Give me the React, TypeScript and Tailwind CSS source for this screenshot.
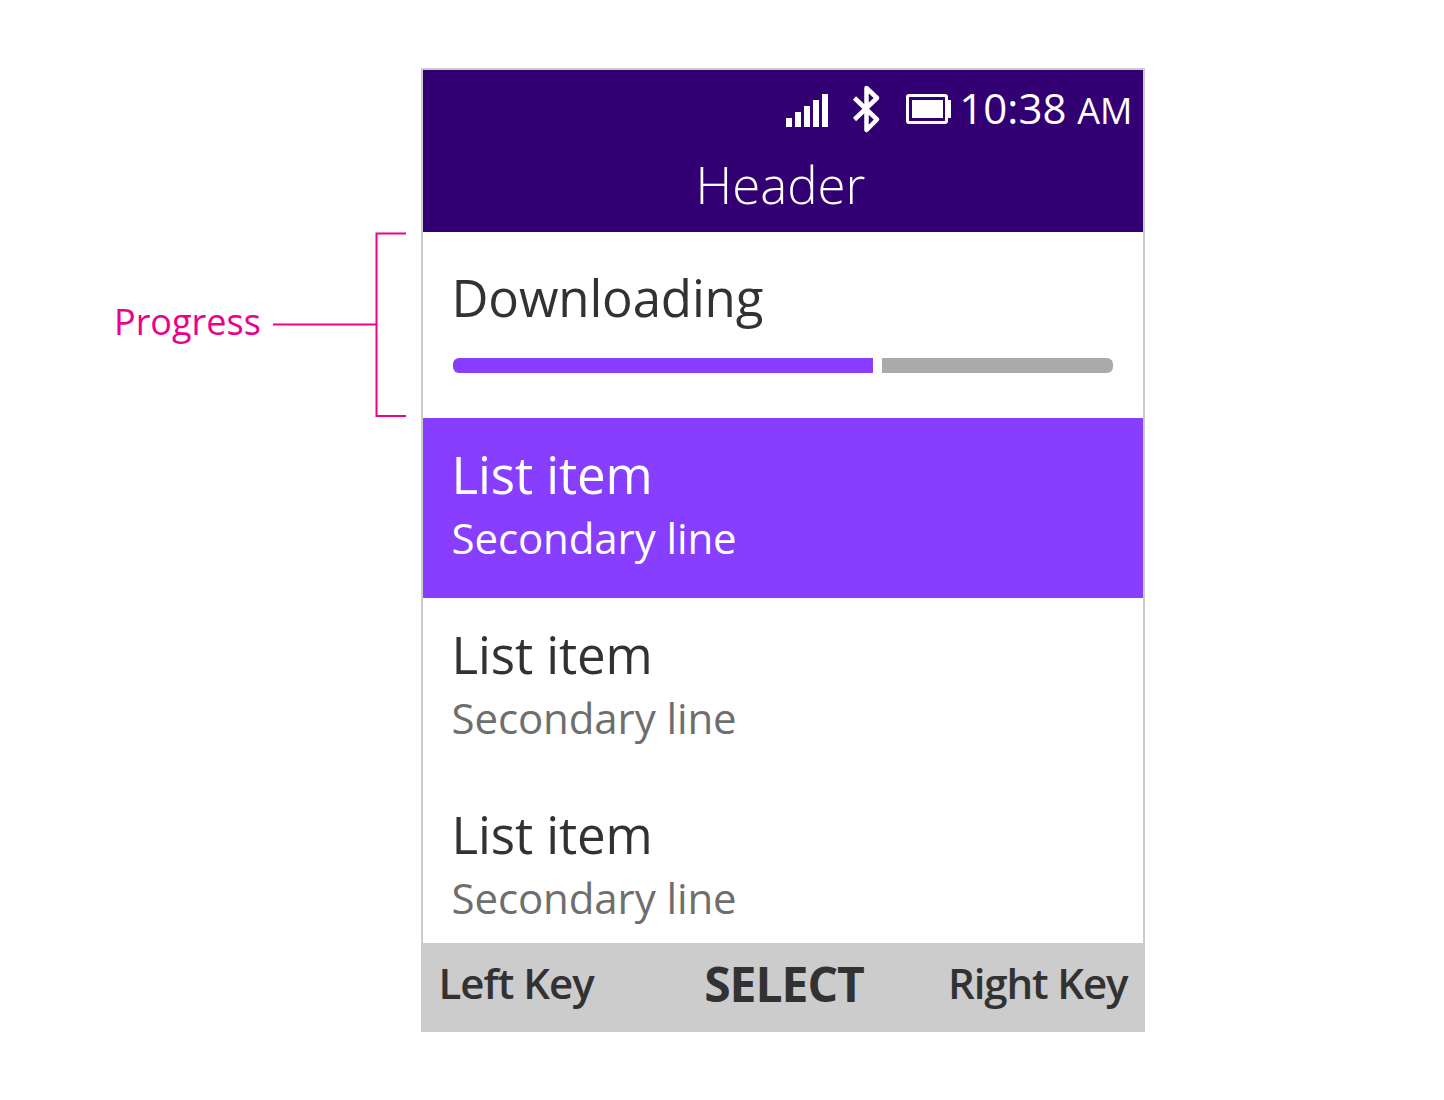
const items = [true, false, false];

export default function App() {
  return (
    <main className="flex h-[1100px] w-[1444px] items-start overflow-hidden bg-white pt-[68px] font-['Open_Sans',sans-serif]">
      <aside className="flex w-[420.5px] shrink-0 items-center pl-[114px] pt-[157px] text-[#ec008c]">
        <span className="w-[159px] shrink-0 whitespace-nowrap pb-[6px] text-[36px] leading-[48px]">Progress</span>
        <svg className="shrink-0" width="147" height="200" fill="none" stroke="currentColor" strokeWidth="2">
          <path d="M133 8.500H103.500V191H133M0 99.500H103" />
        </svg>
      </aside>
      <section className="flex h-[964px] w-[724px] shrink-0 flex-col border-2 border-[#cccccc] bg-white">
        <header className="flex h-[162px] shrink-0 flex-col bg-[#320073] text-white">
          <div className="flex h-[77px] items-start justify-end gap-2 pr-[10px]">
            <svg className="shrink-0" width="168" height="77" fill="white">
              <path d="M3 48h6v9h-6zM12 42h6v15h-6zM21 36h6v21h-6zM30 30h6v27h-6zM39 24h6v33h-6z" />
              <path d="M71.500 28L94 49.500L83.500 60V18L94 28L71.500 49.500" fill="none" stroke="white" strokeWidth="4.500" strokeLinejoin="round" />
              <rect x="124.500" y="25.500" width="39" height="27" rx="1.500" fill="none" stroke="white" strokeWidth="3" />
              <path d="M129 30h31v18h-31zM165 30h3v18h-3z" />
            </svg>
            <span className="whitespace-nowrap pt-[6px] text-[42px] leading-[63px]">10:38 <span className="text-[36px]">AM</span></span>
          </div>
          <h1 className="pr-[4px] text-center text-[51px] font-light leading-[74px]">Header</h1>
        </header>
        <div className="flex h-[186px] shrink-0 flex-col gap-[26px] pl-[29px] pr-[30px] pt-[30px] text-[#323232]">
          <div className="text-[51px] leading-[70px] tracking-[-0.15px]">Downloading</div>
          <div className="flex h-[15px] gap-[9px] pl-px">
            <div className="w-[420px] rounded-l-[6px] bg-[#873eff]" />
            <div className="flex-1 rounded-r-[6px] bg-[#aaaaaa]" />
          </div>
        </div>
        <div className="flex min-h-0 flex-1 flex-col overflow-hidden">
          {items.map((selected, i) => (
            <article key={i} className={selected ? "flex h-[180px] shrink-0 flex-col bg-[#873eff] px-[29px] pt-[23px] text-white" : "flex h-[180px] shrink-0 flex-col px-[29px] pt-[23px] text-[#323232]"}>
              <div className="text-[51px] leading-[66px] tracking-[-0.1px]">List item</div>
              <div className={selected ? "text-[42px] leading-[62px] tracking-[-0.1px]" : "text-[42px] leading-[62px] tracking-[-0.1px] text-[#6e6e6e]"}>Secondary line</div>
            </article>
          ))}
        </div>
        <footer className="grid h-[87px] shrink-0 grid-cols-[1fr_auto_1fr] items-center bg-[#cccccc] pb-[6px] pl-[16px] pr-[15px] text-[42px] font-semibold tracking-[-1px] text-[#323232]">
          <span className="pb-[2px]">Left Key</span>
          <span className="pl-[2px] text-[48px] font-bold">SELECT</span>
          <span className="pb-[2px] text-right tracking-[-1.100px]">Right Key</span>
        </footer>
      </section>
    </main>
  );
}
